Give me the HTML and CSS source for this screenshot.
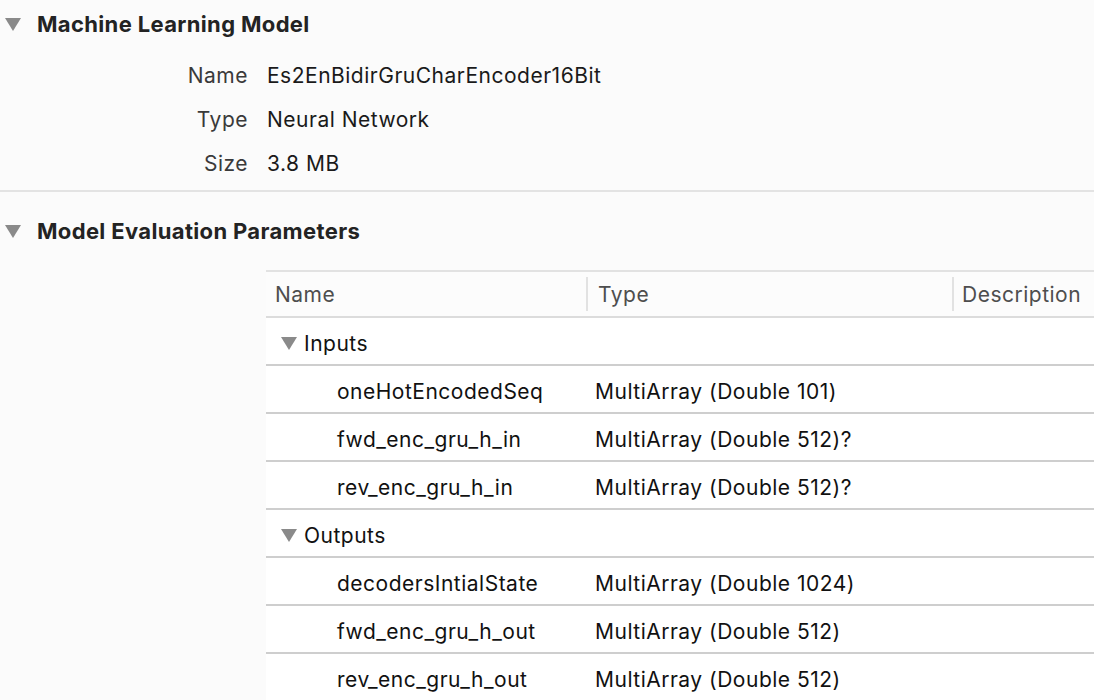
FILE: index.html
```html
<!DOCTYPE html>
<html>
<head>
<meta charset="utf-8">
<link rel="stylesheet" href="styles.css">
</head>
<body>
<section class="section first">
  <div class="section-head">
    <span class="disclosure big"></span>
    <h2>Machine Learning Model</h2>
  </div>
  <div class="props">
    <div class="prop"><span class="label">Name</span><span class="value">Es2EnBidirGruCharEncoder16Bit</span></div>
    <div class="prop"><span class="label">Type</span><span class="value">Neural Network</span></div>
    <div class="prop"><span class="label">Size</span><span class="value">3.8 MB</span></div>
  </div>
</section>
<section class="section second">
  <div class="section-head">
    <span class="disclosure big"></span>
    <h2>Model Evaluation Parameters</h2>
  </div>
  <div class="table">
    <div class="thead">
      <div class="th c-name">Name</div>
      <div class="th c-type">Type</div>
      <div class="th c-desc">Description</div>
    </div>
    <div class="group"><span class="disclosure small"></span>Inputs</div>
    <div class="row"><span class="c-name">oneHotEncodedSeq</span><span class="c-type">MultiArray (Double 101)</span></div>
    <div class="row"><span class="c-name">fwd_enc_gru_h_in</span><span class="c-type">MultiArray (Double 512)?</span></div>
    <div class="row"><span class="c-name">rev_enc_gru_h_in</span><span class="c-type">MultiArray (Double 512)?</span></div>
    <div class="group"><span class="disclosure small"></span>Outputs</div>
    <div class="row"><span class="c-name">decodersIntialState</span><span class="c-type">MultiArray (Double 1024)</span></div>
    <div class="row"><span class="c-name">fwd_enc_gru_h_out</span><span class="c-type">MultiArray (Double 512)</span></div>
    <div class="row"><span class="c-name">rev_enc_gru_h_out</span><span class="c-type">MultiArray (Double 512)</span></div>
  </div>
</section>
</body>
</html>
```

FILE: styles.css
```css
html, body {
  margin: 0;
  padding: 0;
  background: #fbfbfb;
  overflow: hidden;
}
body {
  width: 1094px;
  height: 700px;
  font-family: "Inter", "Noto Sans", sans-serif;
  color: #1e1e1e;
  font-size: 21px;
  letter-spacing: 0.5px;
}
.section-head {
  display: flex;
  align-items: center;
  height: 46px;
}
.first .section-head {
  margin-top: 1px;
}
.section-head h2 {
  margin: 0;
  font-size: 22px;
  font-weight: 700;
  letter-spacing: 0.35px;
  margin-left: 16px;
  color: #232323;
}
.disclosure {
  display: inline-block;
  width: 0;
  height: 0;
  border-style: solid;
  border-color: #8a8a8a transparent transparent transparent;
}
.disclosure.big {
  border-width: 13px 8px 0 8px;
  margin-left: 5px;
}
.disclosure.small {
  border-width: 13px 8px 0 8px;
  margin-right: 7px;
}
.props {
  display: flex;
  flex-direction: column;
  padding: 6px 0 7px;
}
.prop {
  display: flex;
  height: 44px;
  align-items: center;
}
.label {
  width: 248px;
  text-align: right;
  color: #3a3a3a;
}
.value {
  margin-left: 19px;
  color: #1a1a1a;
}
.first {
  border-bottom: 2px solid #e3e3e3;
  height: 191px;
  box-sizing: border-box;
}
.second .section-head {
  margin-top: 16px;
}
.table {
  margin-left: 266px;
  margin-top: 16px;
  background: #fff;
  border-top: 2px solid #e2e2e2;
}
.thead {
  display: flex;
  height: 44px;
  align-items: center;
  background: #fcfcfc;
  border-bottom: 2px solid #dcdcdc;
  color: #4e4e4e;
}
.th {
  height: 34px;
  display: flex;
  align-items: center;
}
.th.c-name { width: 320px; padding-left: 9px; box-sizing: border-box; }
.th.c-type { width: 366px; padding-left: 10px; border-left: 2px solid #e2e2e2; box-sizing: border-box; }
.th.c-desc { flex: 1; padding-left: 8px; border-left: 2px solid #e2e2e2; }
.group {
  height: 42px;
  padding-top: 4px;
  display: flex;
  align-items: center;
  padding-left: 15px;
  border-bottom: 2px solid #cecece;
  color: #111;
}
.row {
  height: 42px;
  padding-top: 4px;
  display: flex;
  align-items: center;
  border-bottom: 2px solid #cecece;
  color: #111;
}
.row .c-name {
  width: 329px;
  padding-left: 71px;
  box-sizing: border-box;
}
```
